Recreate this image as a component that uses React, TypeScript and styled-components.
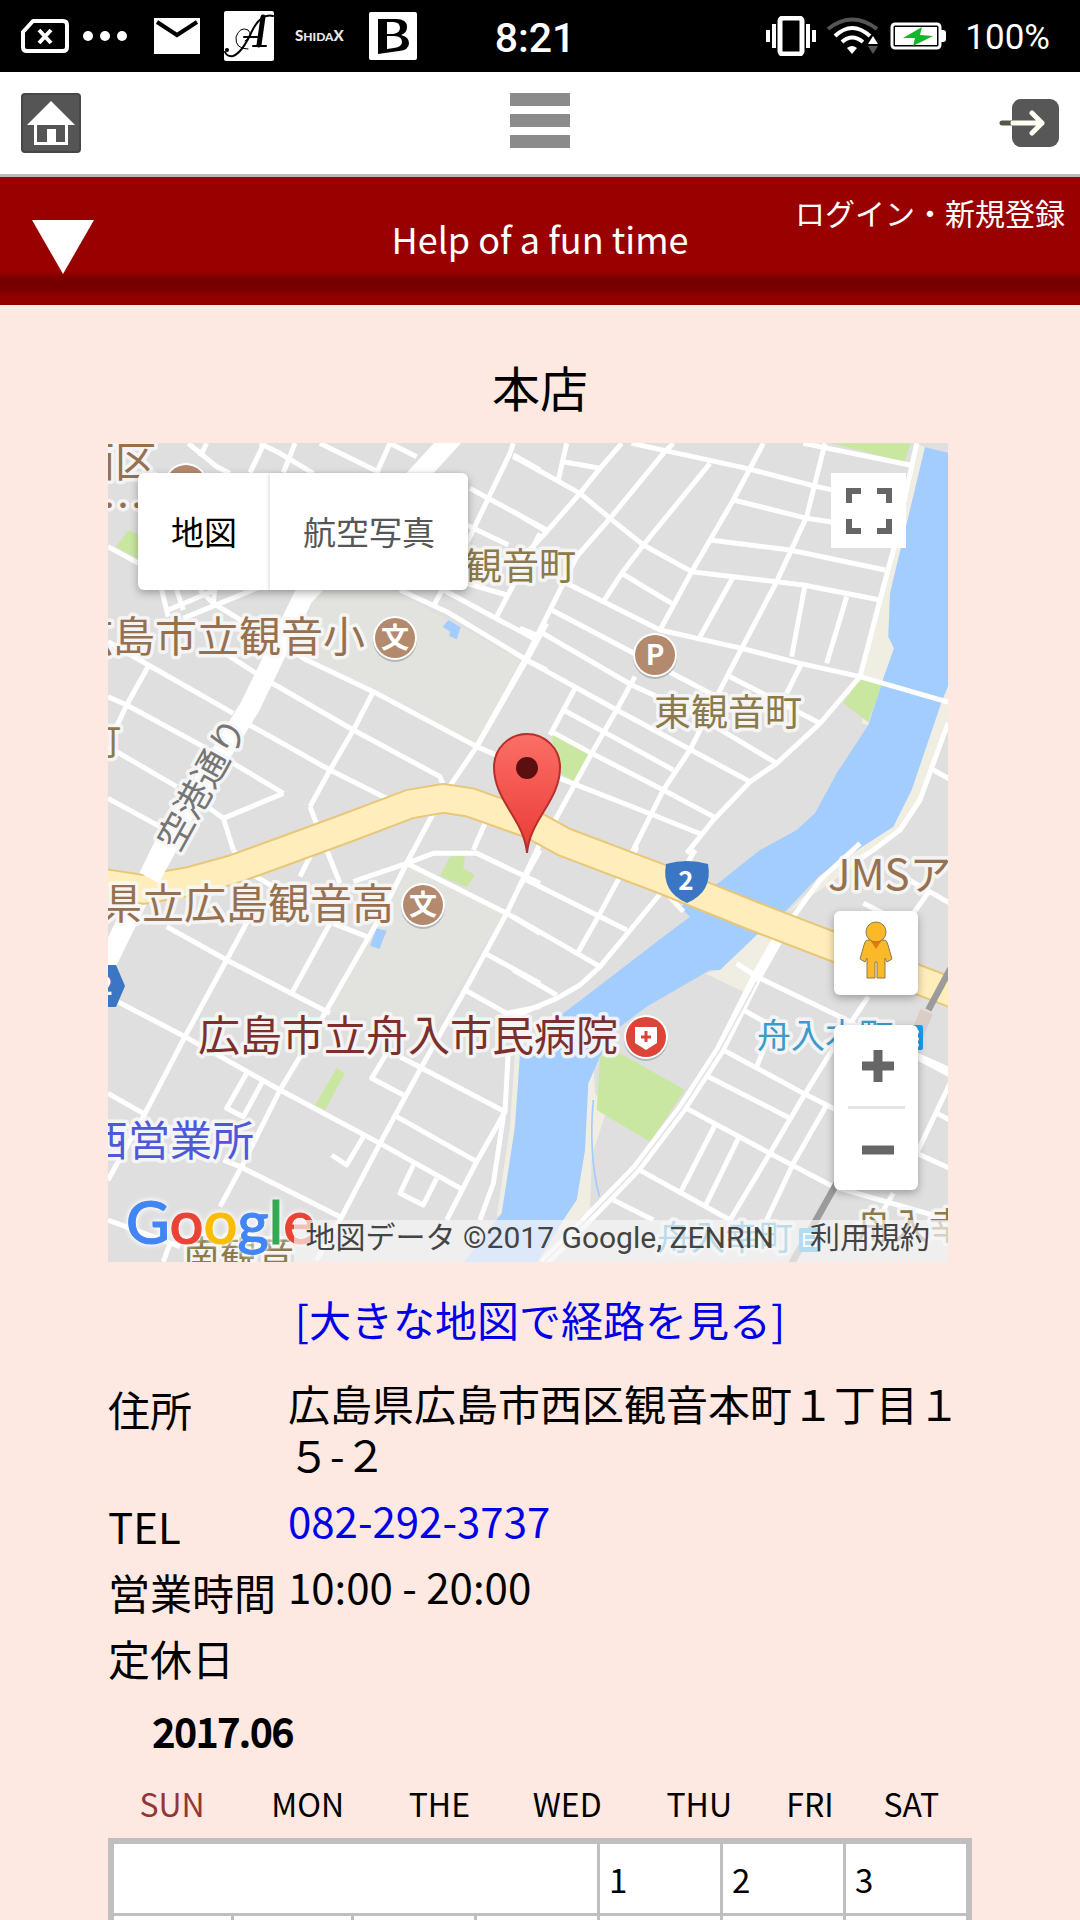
import React from "react";
import styled, { createGlobalStyle } from "styled-components";

const jp = `"Noto Sans CJK JP", "Noto Sans", sans-serif`;
const roboto = `Roboto, "Noto Sans CJK JP", sans-serif`;

const Global = createGlobalStyle`
  *, *::before, *::after { box-sizing: border-box; }
  body { margin: 0; background: #fde8e2; color: #000; font-family: ${jp}; }
  button { font: inherit; color: inherit; border: 0; padding: 0; background: none; cursor: pointer; }
  a { color: #0000e8; text-decoration: none; }
  svg { display: block; }
`;

const Page = styled.div`
  height: 100vh;
  overflow: hidden;
`;

/* ---------- status bar ---------- */
const StatusBar = styled.div`
  display: grid;
  grid-template-columns: 1fr auto 1fr;
  align-items: center;
  height: 72px;
  padding: 0 30px 0 20px;
  background: #000;
  color: #fff;
  font-family: ${roboto};
`;
const Notifications = styled.div`
  display: flex;
  align-items: center;
`;
const Slot = styled.span<{ $wide?: boolean }>`
  display: flex;
  justify-content: center;
  width: ${(p) => (p.$wide ? 72 : 49)}px;
`;
const Clock = styled.time`
  font-size: 41px;
  font-weight: 500;
  line-height: 48px;
  padding-top: 3px;
`;
const System = styled.div`
  display: flex;
  align-items: center;
  justify-content: flex-end;
  gap: 10px;
`;
const Percent = styled.span`
  font-size: 35px;
  line-height: 42px;
  padding: 3px 0 0 9px;
`;

/* ---------- site header ---------- */
const TopNav = styled.nav`
  display: flex;
  justify-content: space-between;
  align-items: center;
  height: 105px;
  padding: 0 21px;
  background: #fff;
  border-bottom: 3px solid #bbb;
`;
const Burger = styled.button`
  display: grid;
  gap: 8px;
  width: 60px;
  padding-bottom: 5px;
`;
const Bar = styled.span`
  height: 13px;
  background: #8b8b8b;
`;
const Banner = styled.header`
  display: grid;
  grid-template-columns: 1fr auto 1fr;
  align-items: center;
  height: 128px;
  padding: 0 14px 6px;
  color: #fff;
  background: linear-gradient(#900 0 94px, #760000 103px 111px, #920000 120px);
  box-shadow: 0 4px 0 #fbeee4;
`;
const Toggle = styled.button`
  justify-self: start;
  padding: 18px 0 0 18px;
`;
const Tagline = styled.p`
  margin: 0;
  font-size: 36px;
  line-height: 54px;
`;
const Login = styled.a`
  && { color: #fff; }
  justify-self: end;
  align-self: start;
  padding: 13px 1px 0 0;
  font-size: 30px;
  line-height: 44px;
`;

/* ---------- shop ---------- */
const Main = styled.main`
  width: 80%;
  margin: 0 auto;
`;
const ShopName = styled.h1`
  margin: 45px 0 21px;
  font-size: 48px;
  font-weight: 400;
  line-height: 72px;
  text-align: center;
`;
const MapBox = styled.section`
  position: relative;
  width: calc(100% - 24px);
  height: 819px;
  overflow: hidden;
  background: #dfdfdf;
`;
const MapArt = styled.svg`
  width: 100%;
  height: 100%;
`;
const MapTypes = styled.div`
  position: absolute;
  top: 30px;
  left: 30px;
  display: flex;
  border-radius: 6px;
  background: #fff;
  box-shadow: 0 3px 9px rgba(0, 0, 0, 0.3);
`;
const MapType = styled.button<{ $active?: boolean }>`
  height: 117px;
  padding: 0 33px 2px;
  font-size: 33px;
  color: ${(p) => (p.$active ? "#000" : "#565656")};
  & + & { box-shadow: -2px 0 3px rgba(0, 0, 0, 0.1); border-radius: 0 6px 6px 0; }
`;
const Fullscreen = styled.button`
  position: absolute;
  top: 30px;
  right: 42px;
  display: grid;
  place-items: center;
  width: 75px;
  height: 75px;
  background: #fff;
`;
const SideControls = styled.div`
  position: absolute;
  right: 30px;
  bottom: 72px;
  display: grid;
  gap: 30px;
`;
const Card = styled.div`
  display: grid;
  justify-items: center;
  width: 84px;
  border-radius: 6px;
  background: #fff;
  box-shadow: 0 3px 9px rgba(0, 0, 0, 0.3);
`;
const CardButton = styled.button<{ $tall?: boolean }>`
  display: grid;
  place-items: center;
  width: 100%;
  height: ${(p) => (p.$tall ? 84 : 81)}px;
  padding: ${(p) => (p.$tall ? "0 0 6px" : "0 0 0 3px")};
`;
const Rule = styled.span`
  width: 57px;
  height: 3px;
  background: #e4e4e4;
`;
const Brand = styled.a`
  position: absolute;
  left: 18px;
  bottom: 3px;
  font-family: Lato, sans-serif;
  font-size: 60px;
  font-weight: 500;
  line-height: 76px;
  text-shadow: 0 0 6px #fff, 0 0 6px #fff, 0 0 3px #fff;
`;
const Letter = styled.span<{ $tone: string }>`
  color: ${(p) => p.$tone};
  -webkit-text-stroke: 1px ${(p) => p.$tone};
`;
const Credits = styled.div`
  position: absolute;
  right: 0;
  bottom: 0;
  display: flex;
  height: 42px;
  background: rgba(245, 245, 245, 0.7);
  color: #444;
  font-family: ${roboto};
  font-size: 30px;
  line-height: 35px;
  white-space: nowrap;
`;
const Credit = styled.span`
  padding: 0 18px 0 12px;
`;
const Terms = styled.a`
  && { color: #444; }
  padding: 0 18px;
`;
const Directions = styled.p`
  margin: 25px 0 27px;
  font-size: 42px;
  line-height: 63px;
  text-align: center;
`;
const Facts = styled.dl`
  display: grid;
  grid-template-columns: 180px 1fr;
  margin: 0;
  font-size: 42px;
`;
const Term = styled.dt`
  line-height: 63px;
`;
const Detail = styled.dd`
  min-height: 66px;
  margin: 0;
  padding-bottom: 15px;
  line-height: 51px;
`;
const Month = styled.h2`
  margin: 8px 0 18px;
  padding-left: 45px;
  font-size: 39px;
  font-weight: 400;
  line-height: 60px;
  -webkit-text-stroke: 2px #000;
`;
const Weekdays = styled.table`
  width: calc(100% - 6px);
  border-collapse: collapse;
  font-size: 32px;
  line-height: 50px;
`;
const Weekday = styled.th<{ $sunday?: boolean }>`
  padding: 0 0 10px;
  font-weight: 400;
  text-align: center;
  color: ${(p) => (p.$sunday ? "#943636" : "#000")};
`;
const Calendar = styled.table`
  width: 100%;
  table-layout: fixed;
  border: 6px solid #bfbfbf;
  border-spacing: 0;
  background: #fff;
  font-size: 33px;
`;
const Column = styled.col<{ $width?: number }>`
  width: ${(p) => (p.$width ? `${p.$width}px` : "auto")};
`;
const Day = styled.td`
  height: 72px;
  padding: 0 9px;
  line-height: 50px;
  border-bottom: 3px solid #bfbfbf;
  & + & { border-left: 3px solid #bfbfbf; }
`;

const lines = {
  tl: "265,40 350,110 390,130|320,40 300,80|490,45 450,128|480,40 540,70 640,130|585,40 550,128|660,40 840,128|870,40 830,128|870,40 950,80|1240,40 1230,70 1160,215 1110,320 1000,530|1240,75 1320,120|1110,175 1340,300|1100,285 1225,345|1320,310 1300,350 1190,560|900,480 1040,545 1280,690 1340,720|1030,480 1300,625|1100,460 1220,495|1340,580 1280,690 1130,950 1045,1075|300,480 340,520 620,690 820,785 1130,950 1200,980|180,460 205,560|205,540 345,480|230,480 250,540|345,470 340,520|250,565 530,450|24,350 190,440|375,670 500,750 760,900 1020,1040 1035,1080|24,635 145,705 400,850|440,880 690,1020 870,1110|24,800 80,825 310,950|400,1000 550,1090|630,1130 655,1195|550,1090 370,1165 280,1100|150,700 80,825 40,910|24,950 230,1070|24,1105 180,1190|820,785 760,900 690,1020 630,1130|370,1165 400,1260|1005,1140 920,1300|1155,1180 1120,1260",
  tr: "140,40 115,150|130,95 240,115|-20,80 0,90 180,190 270,265 370,345 515,425 640,440 850,465 1080,510|305,40 240,115 180,190 80,305 0,390|460,40 430,70 270,265 170,380 130,460 20,680 -130,950|335,40 450,65 680,115 890,170 960,185|570,100 370,345 305,430 250,515|730,40 640,210 515,425 420,600|640,210 860,265 960,280|850,40 1170,105|915,40 860,260 770,455 665,655 590,800 510,960 430,1080 330,1280|570,330 810,360 1095,420|1190,40 1120,360 1080,510 1020,740|305,430 455,520|640,440 540,620|855,465 815,680|980,500 920,700|140,460 420,600 665,655 840,700 1020,740 1290,818|1020,740 900,880 770,1000 690,1055 580,1170 500,1270|630,740 900,880|95,540 590,800|60,605 335,765 520,850 770,1000|10,685 290,840 690,1055|165,775 90,915|130,840 260,910 460,1020|95,905 215,970 430,1080 590,1165|120,1045 400,1155 550,1215|345,740 290,840 215,970 100,1180|845,700 800,790|0,595 60,620|-20,245 80,305|1284,880 1200,1110 1140,1200 1060,1260 1000,1300|1240,1020 1290,1048",
  bl: "940,0 920,40 830,220 680,480 600,620 540,720 425,950 360,1070|920,40 760,95|920,40 1000,10 1130,10 1320,100|920,40 1220,190 1320,250|1330,-40 1270,85 1220,190 1095,420 965,650 840,880 720,1110 650,1230|640,0 600,80|680,0 720,100|700,220 800,260|690,220 575,430|450,200 380,330 255,560 130,800 24,990|200,230 380,330 690,490|24,440 255,560 540,720 840,880 1090,1020|440,670 380,775 430,800 490,690|24,730 130,790|370,930 420,950 720,1100|24,1110 240,1190|210,1180 190,1235|860,610 815,685 910,735|900,620 1215,785|890,800 1130,935|1225,600 1215,785 1130,935 1040,1110|1210,800 1180,1000 1140,1110|790,860 740,945 695,915|940,945 900,1030 970,1065 1010,985|1155,310 1320,400|1095,420 1220,490 1320,470|450,70 520,110|400,0 415,20",
  br: "1020,-20 900,90 820,200|650,340 710,380 960,500 1290,675|1030,160 1110,200|1230,120 1180,190|1150,80 1290,160|1045,440 930,610 850,740 750,910 630,1110|670,480 760,530|610,600 850,730 960,785|565,680 810,805|490,770 750,910 940,1010 1290,1110|920,765 820,940 740,1110|730,600 710,650|585,825 480,1030|655,865 555,1070|350,955 630,1110|280,1050 400,1110|60,0 0,110|20,90 320,240|300,80 240,190 175,305|-20,200 240,350|430,120 240,350 180,405 110,445 -20,500|-20,360 110,435|440,130 490,185|350,-10 340,15|525,0 505,35|1290,700 1190,910 1290,955|1250,790 1290,810|1120,1030 1090,1080|1190,615 1290,660",
};
const offsets: Record<string, string> = { tl: "0 0", tr: "1260 0", bl: "0 1260", br: "1260 1260" };
const highway = "0,1358 130,1378 270,1354 400,1318 560,1260 740,1194 930,1122 1030,1105 1110,1117 1300,1185 1390,1235 1680,1345 1960,1458 2200,1550 2560,1690";

const Label = styled.text<{ $tone: string; $size?: number }>`
  font-family: ${jp};
  font-size: ${(p) => p.$size ?? 42}px;
  fill: ${(p) => p.$tone};
  stroke: rgba(248, 248, 248, 0.9);
  stroke-width: 7px;
  stroke-linejoin: round;
  paint-order: stroke;
`;
const Glyph = styled.text<{ $size: number }>`
  font-family: ${jp};
  font-size: ${(p) => p.$size}px;
  font-weight: 700;
  text-anchor: middle;
  fill: #fff;
`;

function Badge({ x, y, text, tone = "#b38a6d" }: { x: number; y: number; text?: string; tone?: string }) {
  return (
    <g transform={`translate(${x} ${y})`}>
      <circle cy="2" r="22" fill="#b5b5b5" />
      <circle r="22" fill="#fff" />
      <circle r="20" fill={tone} />
      {text && <Glyph $size={28} y="10">{text}</Glyph>}
    </g>
  );
}

function MapDrawing() {
  return (
    <MapArt viewBox="24 39 2520 2457" preserveAspectRatio="xMidYMid slice" role="img" aria-label="地図">
      <defs>
        <linearGradient id="pin" x1="0" y1="0" x2="0" y2="1">
          <stop offset="0" stopColor="#fb6f66" />
          <stop offset="1" stopColor="#ea3a35" />
        </linearGradient>
      </defs>
      <rect x="24" y="39" width="2520" height="2457" fill="#dfdfdf" />
      <g fill="#e2e3de">
        <path d="M640 480H880L1280 700 1130 950 620 680Z" />
        <path d="M920 1305 1220 1440 1000 1800 680 1740Z" />
      </g>
      <g fill="#f0eee3">
        <path d="M2450 40 2475 52 2370 490 2365 620 2382 655 2345 760 2305 885 2285 880 2310 760 2285 740Z" />
        <path d="M2544 700 2544 880 2460 1110 2400 1200 2290 1290 2060 1450 2180 1330 2300 1240 2400 1130 2500 830Z" />
        <path d="M2035 1510 1970 1515 1860 1620 1815 1630 1930 1685 1980 1640Z" />
        <path d="M1480 1900 1462 1960 1455 2160 1430 2310 1360 2400 1400 2400 1470 2340 1475 2180 1520 2040 1485 1990Z" />
        <path d="M1245 1870 1262 1880 1220 2350 1190 2360 1230 2090Z" />
      </g>
      <path
        d="M2475 52 2560 72V730L2525 815 2435 1080 2380 1190 2280 1255 2160 1335 2060 1440 1970 1515 1860 1620 1830 1620 1640 1730 1560 1790 1500 1880 1465 1960 1455 2160 1430 2310 1390 2370 1310 2500H1090L1205 2350 1245 2090 1260 1870 1390 1750 1430 1720 1560 1620 1690 1520 1770 1460 1740 1430 1860 1355 1980 1260 2090 1200 2145 1150 2210 1030 2305 885 2345 760 2382 655 2365 620 2370 490Z"
        fill="#a3ccff"
      />
      <path d="M1480 2010Q1465 2170 1498 2300" fill="none" stroke="#a3ccff" strokeWidth="5" />
      <g fill="#a3ccff">
        <path d="M1028 590 1045 570 1082 592 1070 628 1048 618 1050 605Z" />
        <path d="M830 1495 860 1502 838 1557 810 1547Z" />
      </g>
      <g fill="#c9e7a0">
        <path d="M85 300 130 320 130 395 48 350Z" />
        <path d="M2195 40H2430L2415 97Z" />
        <path d="M2280 745 2345 765 2305 877 2230 820Z" />
        <path d="M1355 912 1472 970 1425 1058 1370 1020Z" />
        <path d="M1500 1880 1560 1870 1755 1980 1650 2135 1490 2040Z" />
        <path d="M1050 1280 1095 1275 1090 1315 1125 1335 1100 1372 1020 1337Z" />
        <path d="M710 1915 735 1930 675 2040 645 2025Z" />
      </g>
      <g fill="none" stroke="#fff" strokeWidth="15" strokeLinejoin="round">
        {Object.entries(lines).map(([key, value]) => (
          <g key={key} transform={`translate(${offsets[key]})`}>
            {value.split("|").map((points) => (
              <polyline key={points} points={points} />
            ))}
          </g>
        ))}
        <polyline points="2035,1525 1970,1640 1860,1860 1750,2030 1610,2215 1460,2370 1330,2500" strokeWidth="32" />
        <polyline points="1970,1655 1860,1860 1750,2030 1610,2215 1460,2370 1330,2500" stroke="#e4e4e4" strokeWidth="5" />
        <polyline points="1060,20 950,140 610,500 450,830 370,960 190,1250 0,1640" strokeWidth="60" />
      </g>
      <g fill="none" strokeLinejoin="round">
        <polyline points={highway} stroke="#e9c778" strokeWidth="92" />
        <polyline points={highway} stroke="#ffeebb" strokeWidth="80" />
        <polyline points="240,1180 150,1345" stroke="#fff" strokeWidth="60" />
        <polyline points="2560,1600 2485,1740" stroke="#9b9b9b" strokeWidth="20" />
        <polyline points="2480,1745 2440,1840" stroke="#dacdc6" strokeWidth="40" />
        <polyline points="2210,2260 2075,2500" stroke="#9b9b9b" strokeWidth="20" />
      </g>
      <g transform="translate(24 39) scale(3)">
        <Badge x={78} y={42} />
        <Label $tone="#96704f" x="-35" y="34">西区</Label>
        <Label $tone="#96704f" x="-6" y="78">…</Label>
        <Label $tone="#8c7a4b" $size={37} x="357" y="137">観音町</Label>
        <Label $tone="#96704f" x="-37" y="209">広島市立観音小</Label>
        <Badge x={287} y={195} text="文" />
        <Badge x={547} y={212} text="P" />
        <Label $tone="#8c7a4b" $size={37} x="546" y="283">東観音町</Label>
        <Label $tone="#8c7a4b" $size={37} x="-24" y="312">町</Label>
        <Label $tone="#757575" $size={36} x="0" y="13" textAnchor="middle" transform="translate(94 341) rotate(-61)">
          空港通り
        </Label>
        <Label $tone="#96704f" x="-8" y="476">県立広島観音高</Label>
        <Badge x={315} y={462} text="文" />
        <path d="M-12 522H8L17 543 8 564H-12Z" fill="#3a76c4" />
        <Glyph $size={26} x="-3" y="552">2</Glyph>
        <path d="M558 421Q579 415 600 421Q605 449 579 460Q553 449 558 421Z" fill="#3a76c4" />
        <Glyph $size={26} x="578" y="447">2</Glyph>
        <Label $tone="#96704f" x="720" y="447">JMSア</Label>
        <Label $tone="#7c2f2b" x="90" y="608">広島市立舟入市民病院</Label>
        <Badge x={538} y={594} tone="#db4437" />
        <path d="M527 584H549V600L538 607 527 600Z" fill="#fff" />
        <path d="M538 588V599M533 594H543" stroke="#db4437" strokeWidth="3" />
        <Label $tone="#3d9bcb" $size={34} x="649" y="605">舟入本町</Label>
        <rect x="795" y="582" width="20" height="25" rx="2" fill="#1a9fec" />
        <path d="M804 589H811M804 596H811M804 602H811" stroke="#fff" strokeWidth="3" />
        <Label $tone="#4e59d9" x="-22" y="713">西営業所</Label>
        <Label $tone="#8c7a4b" $size={37} x="75" y="825">南観音</Label>
        <Label $tone="#8c7a4b" $size={37} x="747" y="797">舟入幸町</Label>
        <Label $tone="#3d9bcb" $size={34} x="549" y="807">舟入幸町</Label>
        <rect x="691" y="785" width="22" height="24" rx="2" fill="#1a9fec" />
        <path d="M696 791H708V803H696ZM696 797H708" fill="none" stroke="#fff" strokeWidth="2" />
        <path d="M419 410C416 376 386 358 386 324A33 33 0 0 1 452 324C452 358 422 376 419 410Z" fill="url(#pin)" stroke="#b5302c" strokeWidth="2" />
        <circle cx="419" cy="325" r="11" fill="#5c0f0f" />
      </g>
    </MapArt>
  );
}

function StatusIcons() {
  return (
    <Notifications>
      <Slot>
        <svg width="48" height="34" viewBox="0 0 48 34" fill="none" stroke="#fff" strokeWidth="4" strokeLinejoin="round">
          <path d="M12 2H42Q46 2 46 6V28Q46 32 42 32H6Q2 32 2 28V13Z" />
          <path d="M18 11 30 24M30 11 18 24" />
        </svg>
      </Slot>
      <Slot $wide>
        <svg width="44" height="12" viewBox="0 0 44 12" fill="#fff">
          <circle cx="5" cy="6" r="5" /><circle cx="22" cy="6" r="5" /><circle cx="39" cy="6" r="5" />
        </svg>
      </Slot>
      <Slot $wide>
        <svg width="46" height="36" viewBox="0 0 46 36">
          <rect width="46" height="36" fill="#fff" />
          <path d="M3 4 23 17 43 4" fill="none" stroke="#000" strokeWidth="4" />
        </svg>
      </Slot>
      <Slot $wide>
        <svg width="50" height="50" viewBox="0 0 50 50" fill="none" stroke="#000" strokeLinecap="round">
          <rect width="50" height="50" rx="2" fill="#fff" stroke="none" />
          <path d="M49 5Q37 2 28 20Q18 42 9 45Q3 46 1 41" strokeWidth="2" />
          <path d="M39 6 35 34" strokeWidth="5" />
          <path d="M29 35H42M20 26H36" strokeWidth="2" />
          <path d="M24 38Q11 38 12 26Q16 15 24 19Q30 25 21 30" strokeWidth="1" />
          <circle cx="3" cy="39" r="2" fill="#000" stroke="none" />
        </svg>
      </Slot>
      <Slot $wide>
        <svg width="56" height="24" viewBox="0 0 56 24" fill="#e8e8e8" fontFamily="Lato, sans-serif" fontWeight="900">
          <text x="2" y="17" fontSize="15">S<tspan fontSize="12">HIDA</tspan>X</text>
        </svg>
      </Slot>
      <Slot $wide>
        <svg width="48" height="48" viewBox="0 0 48 48">
          <rect width="48" height="48" rx="2" fill="#fff" />
          <path fillRule="evenodd" d="M9 7H27Q38 7 38 15Q38 21 32 23Q40 25 40 31Q40 38 30 39L9 42ZM18 10V22H24Q31 21 31 16Q31 10 24 10ZM18 24V37L25 36Q33 35 33 30Q33 24 25 24Z" />
        </svg>
      </Slot>
    </Notifications>
  );
}

function SystemIcons() {
  return (
    <>
      <svg width="50" height="40" viewBox="0 0 50 40">
        <rect x="14" y="2" width="22" height="36" rx="3" fill="none" stroke="#fff" strokeWidth="5" />
        <path d="M2 14V26M8 8V32M42 8V32M48 14V26" stroke="#fff" strokeWidth="4" />
      </svg>
      <svg width="54" height="38" viewBox="0 0 54 38" fill="none" stroke="#fff" strokeWidth="4">
        <path d="M2 12Q26-7 51 12" stroke="#555" />
        <path d="M9 19Q26 3 44 19M16 25Q26 16 37 25" />
        <path d="M21 31Q26 27 31 31L26 37Z" fill="#fff" stroke="none" />
        <path d="M42 27 47 19 52 27Z" fill="#fff" stroke="none" />
        <path d="M42 29 47 37 52 29Z" fill="#555" stroke="none" />
      </svg>
      <svg width="56" height="28" viewBox="0 0 56 28">
        <rect x="2" y="2" width="48" height="24" rx="3" fill="none" stroke="#fff" strokeWidth="3" />
        <rect x="5" y="5" width="42" height="18" fill="#fff" />
        <path d="M51 8H53Q56 8 56 11V17Q56 20 53 20H51Z" fill="#fff" />
        <path d="M13 16 32 5 30 13 43 14 23 24 25 16Z" fill="#14b52a" />
      </svg>
    </>
  );
}

const weekdays = ["SUN", "MON", "THE", "WED", "THU", "FRI", "SAT"];
const brand: [string, string][] = [
  ["G", "#4285f4"], ["o", "#ea4335"], ["o", "#fbbc05"], ["g", "#4285f4"], ["l", "#34a853"], ["e", "#ea4335"],
];

export default function App() {
  return (
    <Page>
      <Global />
      <StatusBar>
        <StatusIcons />
        <Clock>8:21</Clock>
        <System>
          <SystemIcons />
          <Percent>100%</Percent>
        </System>
      </StatusBar>
      <TopNav>
        <a href="#home" aria-label="ホーム">
          <svg width="60" height="60" viewBox="0 0 60 60">
            <rect width="60" height="60" rx="4" fill="#464646" />
            <rect x="2" y="2" width="56" height="56" rx="3" fill="#555" />
            <path d="M30 8 54 32H47V52H13V32H6Z" fill="#fff" />
            <path d="M16 32H44V49H35V36H26V49H16Z" fill="#555" />
          </svg>
        </a>
        <Burger aria-label="メニュー"><Bar /><Bar /><Bar /></Burger>
        <a href="#login" aria-label="ログイン">
          <svg width="60" height="48" viewBox="0 0 60 48" fill="none" strokeWidth="5" strokeLinecap="round" strokeLinejoin="round">
            <rect x="13" width="47" height="48" rx="9" fill="#575757" />
            <path d="M3 24H13" stroke="#575748" />
            <path d="M14 24H43M33 14 43 24 33 34" stroke="#fffff4" />
          </svg>
        </a>
      </TopNav>
      <Banner>
        <Toggle aria-label="開く">
          <svg width="62" height="54" viewBox="0 0 62 54"><path d="M0 0H62L31 54Z" fill="#fff" /></svg>
        </Toggle>
        <Tagline>Help of a fun time</Tagline>
        <Login href="#signup">ログイン・新規登録</Login>
      </Banner>
      <Main>
        <ShopName>本店</ShopName>
        <MapBox>
          <MapDrawing />
          <Brand href="#google" aria-label="Google">
            {brand.map(([char, tone], i) => (
              <Letter key={i} $tone={tone}>{char}</Letter>
            ))}
          </Brand>
          <MapTypes>
            <MapType $active>地図</MapType>
            <MapType>航空写真</MapType>
          </MapTypes>
          <Fullscreen aria-label="全画面">
            <svg width="46" height="46" viewBox="0 0 46 46" fill="none" stroke="#666" strokeWidth="6">
              <path d="M3 15V3H15M31 3H43V15M43 31V43H31M15 43H3V31" />
            </svg>
          </Fullscreen>
          <SideControls>
            <Card>
              <CardButton $tall aria-label="ストリートビュー">
                <svg width="34" height="60" viewBox="0 0 34 60" fill="#fbb829" stroke="#8a7a55" strokeWidth="1">
                  <path d="M9 20H25Q28 20 29 25L33 39 28 42 26 38V58H18V42H16V58H8V38L6 42 1 39 5 25Q6 20 9 20Z" />
                  <path d="M11 20H23L17 29Z" fill="#e07c12" stroke="none" />
                  <circle cx="17" cy="12" r="10" />
                </svg>
              </CardButton>
            </Card>
            <Card>
              <CardButton aria-label="拡大">
                <svg width="32" height="32" viewBox="0 0 32 32"><path d="M16 0V32M0 16H32" stroke="#666" strokeWidth="9" /></svg>
              </CardButton>
              <Rule />
              <CardButton aria-label="縮小">
                <svg width="32" height="32" viewBox="0 0 32 32"><path d="M0 16H32" stroke="#666" strokeWidth="9" /></svg>
              </CardButton>
            </Card>
          </SideControls>
          <Credits>
            <Credit>地図データ ©2017 Google, ZENRIN</Credit>
            <Terms href="#terms">利用規約</Terms>
          </Credits>
        </MapBox>
        <Directions><a href="#map">[大きな地図で経路を見る]</a></Directions>
        <Facts>
          <Term>住所</Term>
          <Detail>広島県広島市西区観音本町１丁目１５-２</Detail>
          <Term>TEL</Term>
          <Detail><a href="tel:0822923737">082-292-3737</a></Detail>
          <Term>営業時間</Term>
          <Detail>10:00 - 20:00</Detail>
          <Term>定休日</Term>
          <Detail />
        </Facts>
        <Month>2017.06</Month>
        <Weekdays>
          <thead>
            <tr>
              {weekdays.map((day, i) => (
                <Weekday key={day} scope="col" $sunday={i === 0}>{day}</Weekday>
              ))}
            </tr>
          </thead>
        </Weekdays>
        <Calendar>
          <colgroup>
            <Column $width={117} />
            <Column $width={120} />
            <Column span={5} />
          </colgroup>
          <tbody>
            <tr>
              <Day colSpan={4} />
              <Day>1</Day>
              <Day>2</Day>
              <Day>3</Day>
            </tr>
            <tr>
              {weekdays.map((day) => <Day key={day} />)}
            </tr>
          </tbody>
        </Calendar>
      </Main>
    </Page>
  );
}
